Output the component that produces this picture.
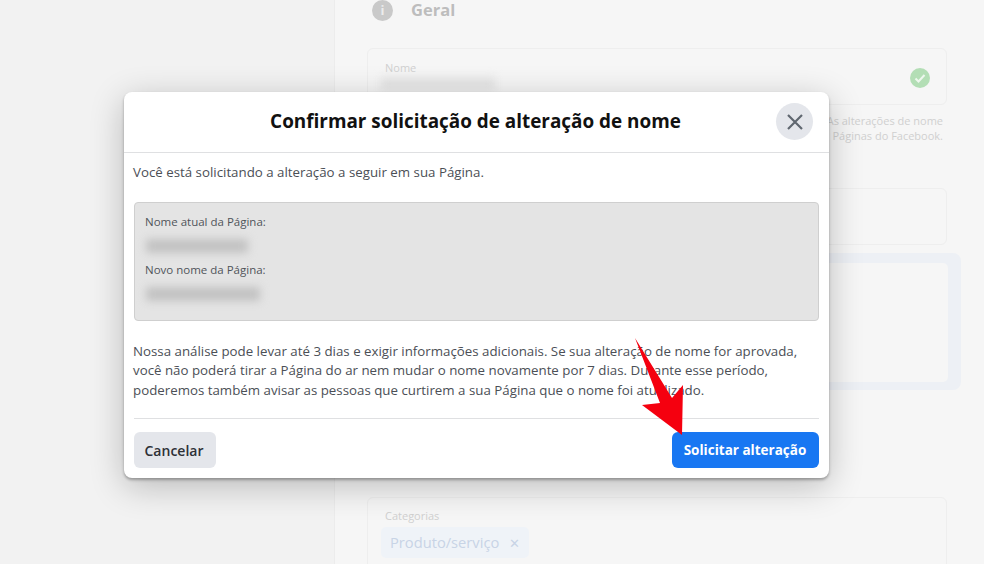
<div class="page">
  <aside class="sidebar"></aside>
  <main class="main">
    <div class="section-head">
      <span class="info">i</span>
      <span class="geral">Geral</span>
    </div>
    <div class="card name-card">
      <div class="lbl">Nome</div>
      <div class="smear"></div>
      <svg class="check" viewBox="0 0 20 20" width="20" height="20" aria-hidden="true">
        <circle cx="10" cy="10" r="10" fill="#b3deb5" />
        <path d="M5.5 10.5l3 3 6-6.5" fill="none" stroke="#eef7ee" stroke-width="2" />
      </svg>
    </div>
    <div class="help">
      <div>As alterações de nome</div>
      <div>Páginas do Facebook.</div>
    </div>
    <div class="card second"></div>
    <div class="ring"><div class="ring-inner"></div></div>
    <div class="card cat-card">
      <div class="lbl">Categorias</div>
      <div class="tag">Produto/serviço <span class="tag-x">✕</span></div>
    </div>
  </main>

  <div class="modal">
    <header class="m-head">
      <h1>Confirmar solicitação de alteração de nome</h1>
      <button class="close" aria-label="Fechar">
        <svg viewBox="0 0 18 18" width="18" height="18" aria-hidden="true">
          <path d="M2 2l14 14M16 2L2 16" fill="none" stroke="#606770" stroke-width="2.2" />
        </svg>
      </button>
    </header>
    <div class="m-body">
      <p class="intro">Você está solicitando a alteração a seguir em sua Página.</p>
      <div class="box">
        <div class="box-lbl">Nome atual da Página:</div>
        <div class="blur b1"></div>
        <div class="box-lbl second-lbl">Novo nome da Página:</div>
        <div class="blur b2"></div>
      </div>
      <p class="para">Nossa análise pode levar até 3 dias e exigir informações adicionais. Se sua alteração de nome for aprovada,<br />você não poderá tirar a Página do ar nem mudar o nome novamente por 7 dias. Durante esse período,<br />poderemos também avisar as pessoas que curtirem a sua Página que o nome foi atualizado.</p>
      <div class="divider"></div>
      <div class="actions">
        <button class="btn cancel">Cancelar</button>
        <button class="btn submit">Solicitar alteração</button>
      </div>
    </div>
  </div>

  <svg class="arrow" viewBox="0 0 984 564" width="984" height="564" aria-hidden="true">
    <polygon points="635,338 672,398 683,385 682,435 642,405 660,403" fill="#f5000f" />
  </svg>
</div>

<style>
  :global(body) {
    margin: 0;
    font-family: "Open Sans", "Noto Sans", sans-serif;
  }
  .page {
    position: relative;
    display: flex;
    width: 984px;
    height: 564px;
    overflow: hidden;
    background: #f2f2f2;
  }
  .sidebar {
    width: 334px;
    flex: none;
  }
  .main {
    flex: 1;
    border-left: 1px solid #ececec;
    background: #f6f6f6;
    padding: 0 37px 0 32px;
    min-width: 0;
  }
  .section-head {
    display: flex;
    align-items: center;
    gap: 17px;
    height: 20px;
    margin: 0 0 28px 5px;
  }
  .info {
    width: 21px;
    height: 21px;
    border-radius: 50%;
    background: #c9c9c9;
    color: #ececec;
    font-size: 13px;
    font-weight: 700;
    line-height: 21px;
    text-align: center;
    flex: none;
  }
  .geral {
    font-size: 16.5px;
    line-height: 20px;
    font-weight: 700;
    color: #bdbdbd;
    margin-left: 1px;
  }
  .card {
    box-sizing: border-box;
    border: 1px solid #eeeeee;
    border-radius: 6px;
    background: #f6f6f6;
    position: relative;
  }
  .name-card {
    height: 57px;
    padding: 12px 17px;
  }
  .lbl {
    font-size: 11px;
    line-height: 14px;
    color: #d0d0d0;
  }
  .smear {
    width: 114px;
    height: 14px;
    margin: 2px 0 0 -4px;
    background: #e6e6e6;
    filter: blur(4px);
  }
  .check {
    position: absolute;
    right: 16px;
    top: 19px;
  }
  .help {
    font-size: 11px;
    line-height: 15px;
    color: #d0d0d0;
    text-align: right;
    margin: 8px 4px 0 0;
  }
  .second {
    height: 57px;
    margin-top: 45px;
  }
  .ring {
    box-sizing: border-box;
    width: 594px;
    height: 137px;
    margin-top: 8px;
    padding: 10px 13px 8px 0;
    border-radius: 0 8px 8px 0;
    background: #edf0f5;
  }
  .ring-inner {
    height: 100%;
    background: #f6f6f6;
    border-radius: 0 5px 5px 0;
  }
  .cat-card {
    height: 90px;
    margin-top: 107px;
    padding: 11px 13px;
  }
  .cat-card .lbl {
    padding-left: 4px;
  }
  .tag {
    display: inline-block;
    margin-top: 4px;
    padding: 0 9px;
    height: 31px;
    line-height: 30px;
    border-radius: 5px;
    background: #eff3f8;
    color: #c8d4e6;
    font-size: 14.7px;
    font-weight: 500;
  }
  .tag-x {
    font-size: 13px;
    margin-left: 6px;
  }

  .modal {
    position: absolute;
    left: 124px;
    top: 92px;
    width: 705px;
    height: 386px;
    background: #fff;
    border-radius: 8px;
    box-shadow: 0 2px 3px rgba(0, 0, 0, 0.3), 0 8px 34px rgba(0, 0, 0, 0.24);
  }
  .m-head {
    box-sizing: border-box;
    height: 61px;
    padding: 0 2px 2px 0;
    border-bottom: 1px solid #dfe0e2;
    display: flex;
    align-items: center;
    justify-content: center;
    position: relative;
  }
  h1 {
    margin: 0;
    font-size: 18.9px;
    font-weight: 700;
    color: #111;
  }
  .close {
    position: absolute;
    right: 16px;
    top: 11px;
    width: 37px;
    height: 37px;
    border: 0;
    border-radius: 50%;
    background: #e4e6eb;
    padding: 0;
    display: flex;
    align-items: center;
    justify-content: center;
  }
  .m-body {
    padding: 0 10px;
  }
  .intro {
    margin: 0 0 0 -1px;
    padding-top: 11px;
    font-size: 13.3px;
    line-height: 17px;
    color: #4b4f56;
  }
  .box {
    box-sizing: border-box;
    height: 119px;
    margin-top: 21px;
    padding: 11px 10px;
    background: #e4e4e4;
    border: 1px solid #cfcfcf;
    border-radius: 4px;
  }
  .box-lbl {
    font-size: 11.5px;
    line-height: 16px;
    color: #50545a;
  }
  .second-lbl {
    margin-top: 9px;
  }
  .blur {
    height: 14px;
    margin-top: 9px;
    background: #c2c2c2;
    filter: blur(4px);
  }
  .b1 { width: 102px; margin-left: 1px; }
  .b2 { width: 114px; margin-left: 1px; }
  .para {
    margin: 21px 0 0 -1px;
    font-size: 13.3px;
    line-height: 19.4px;
    color: #4b4f56;
    white-space: nowrap;
  }
  .divider {
    height: 1px;
    background: #dfe0e2;
    margin-top: 18px;
  }
  .actions {
    display: flex;
    justify-content: space-between;
    margin-top: 13px;
  }
  .btn {
    height: 36px;
    border: 0;
    border-radius: 6px;
    font-family: inherit;
    font-size: 13.5px;
    font-weight: 700;
    padding: 0;
  }
  .cancel {
    width: 82px;
    padding-right: 2px;
    background: #e4e6eb;
    color: #2d3036;
    font-size: 14px;
    font-weight: 600;
  }
  .submit {
    width: 147px;
    padding-right: 1px;
    background: #1877f2;
    color: #fff;
  }
  .arrow {
    position: absolute;
    left: 0;
    top: 0;
    pointer-events: none;
  }
</style>
